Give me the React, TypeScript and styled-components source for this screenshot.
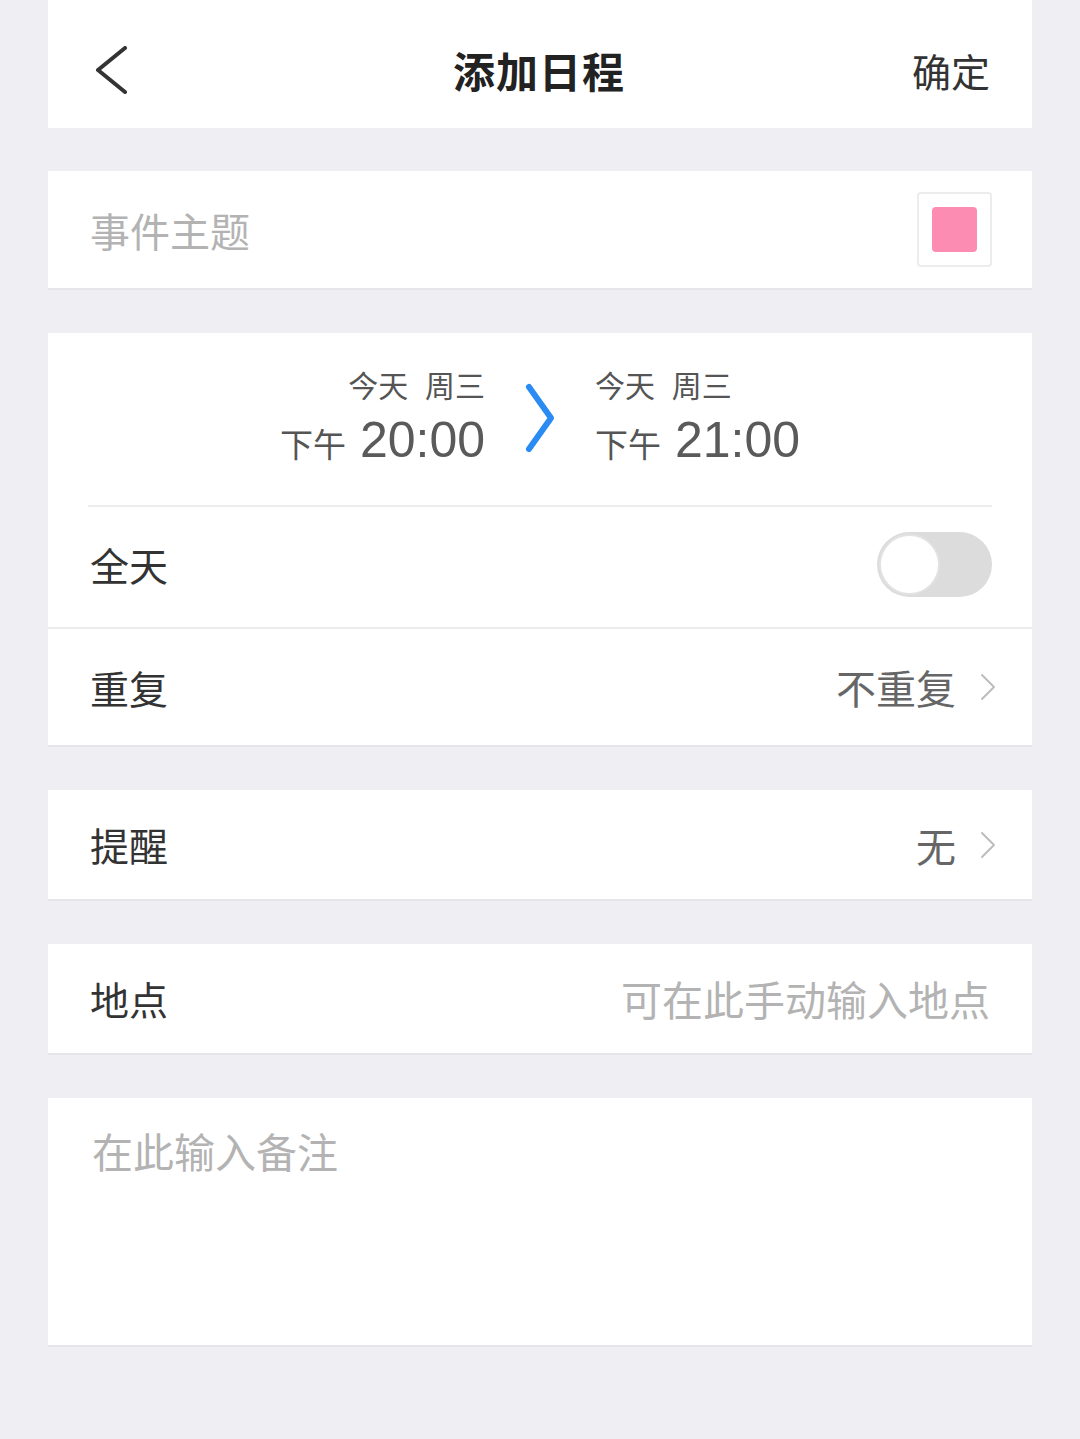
import React from 'react';
import styled, {createGlobalStyle} from 'styled-components';

const GlobalStyle = createGlobalStyle`
  html, body {
    margin: 0;
    padding: 0;
    background: #efeff3;
  }
  body {
    font-family: "Noto Sans CJK SC", "Noto Sans", sans-serif;
  }
`

const Page = styled.div`
  min-height: 1439px;
  padding: 0 48px;
  box-sizing: border-box;
  display: flex;
  flex-direction: column;
  gap: 43px;
`

const Card = styled.section`
  background: #fff;
  border-bottom: 2px solid #e6e6ea;
  box-sizing: border-box;
`

const Header = styled(Card)`
  height: 128px;
  display: grid;
  grid-template-columns: 1fr auto 1fr;
  align-items: center;
  padding: 12px 42px 0 46px;
  border-bottom: none;
`

const BackButton = styled.button`
  justify-self: start;
  background: none;
  border: none;
  padding: 0;
  display: flex;
`

const Title = styled.h1`
  margin: 0;
  font-size: 42px;
  font-weight: 700;
  color: #222;
  letter-spacing: 1px;
  line-height: 1;
  margin-left: -6px;
`

const Confirm = styled.span`
  justify-self: end;
  font-size: 39px;
  color: #333;
  line-height: 1;
`

const SubjectCard = styled(Card)`
  height: 119px;
  display: flex;
  align-items: center;
  justify-content: space-between;
  padding: 0 40px 0 42px;
`

const Placeholder = styled.span<{ $size?: number }>`
  font-size: ${p => p.$size ?? 40}px;
  color: #b3b3b3;
  line-height: 1;
`

const Swatch = styled.div`
  width: 75px;
  height: 75px;
  box-sizing: border-box;
  border: 2px solid #ececec;
  border-radius: 4px;
  display: flex;
  align-items: center;
  justify-content: center;

  &::after {
    content: "";
    width: 45px;
    height: 45px;
    border-radius: 4px;
    background: #fd8cb2;
  }
`

const TimeCard = styled(Card)`
  display: flex;
  flex-direction: column;
`

const TimeRange = styled.div`
  height: 172px;
  display: grid;
  grid-template-columns: 1fr auto 1fr;
  column-gap: 40px;
  align-items: center;
  padding-bottom: 4px;
  box-sizing: border-box;
`

const TimeBlock = styled.div<{ $align: 'left' | 'right' }>`
  display: flex;
  flex-direction: column;
  align-items: ${p => (p.$align === 'right' ? 'flex-end' : 'flex-start')};
  gap: 16px;
  color: #555;
`

const DateLine = styled.div`
  font-size: 30px;
  line-height: 1;
  word-spacing: 10px;
`

const TimeLine = styled.div`
  display: flex;
  align-items: baseline;
  gap: 14px;
  line-height: 1;
`

const Meridiem = styled.span`
  font-size: 33px;
`

const Clock = styled.span`
  font-family: "Liberation Sans", "Noto Sans", sans-serif;
  font-size: 50px;
  color: #5a5a5a;
`

const ArrowIcon = styled.svg`
  margin-top: 2px;
`

const Divider = styled.div<{ $inset?: boolean }>`
  height: 2px;
  background: #ececec;
  margin: ${p => (p.$inset ? '0 40px' : '0')};
`

const Row = styled.div<{ $height: number; $lift?: number }>`
  height: ${p => p.$height}px;
  display: flex;
  align-items: center;
  justify-content: space-between;
  padding: 0 36px ${p => p.$lift ?? 0}px 42px;
  box-sizing: border-box;
`

const RowCard = styled(Card)<{ $height: number }>`
  height: ${p => p.$height}px;
  display: flex;
  align-items: center;
  justify-content: space-between;
  padding: 0 36px 0 42px;
`

const Label = styled.span`
  font-size: 39px;
  color: #333;
  line-height: 1;
`

const Value = styled.span`
  display: flex;
  align-items: center;
  gap: 24px;
  font-size: 40px;
  color: #666;
  line-height: 1;
`

const RightPlaceholder = styled(Placeholder)`
  margin-right: 6px;
`

const Toggle = styled.div<{ $on?: boolean }>`
  width: 115px;
  height: 65px;
  border-radius: 33px;
  background: ${p => (p.$on ? '#4cd964' : '#dcdcdc')};
  margin-right: 4px;
  position: relative;

  &::after {
    content: "";
    position: absolute;
    top: 2px;
    left: ${p => (p.$on ? '52px' : '2px')};
    width: 61px;
    height: 61px;
    box-sizing: border-box;
    border-radius: 50%;
    background: #fff;
    border: 2px solid #e2e2e2;
  }
`

const NotesCard = styled(Card)`
  height: 249px;
  padding: 32px 44px;
`

const Chevron = () => (
    <svg width="16" height="28" viewBox="0 0 16 28">
        <path d="M2 2 L14 14 L2 26" fill="none" stroke="#bdbdbd" strokeWidth="2" strokeLinecap="round"
              strokeLinejoin="round"/>
    </svg>
)

export default function App() {
    return (
        <>
            <GlobalStyle/>
            <Page>
                <Header>
                    <BackButton aria-label="返回">
                        <svg width="36" height="48" viewBox="0 0 36 48">
                            <path d="M31 2 L4 24 L31 46" fill="none" stroke="#333" strokeWidth="4"
                                  strokeLinecap="round" strokeLinejoin="round"/>
                        </svg>
                    </BackButton>
                    <Title>添加日程</Title>
                    <Confirm>确定</Confirm>
                </Header>

                <SubjectCard>
                    <Placeholder>事件主题</Placeholder>
                    <Swatch/>
                </SubjectCard>

                <TimeCard>
                    <TimeRange>
                        <TimeBlock $align="right">
                            <DateLine>今天 周三</DateLine>
                            <TimeLine>
                                <Meridiem>下午</Meridiem>
                                <Clock>20:00</Clock>
                            </TimeLine>
                        </TimeBlock>
                        <ArrowIcon width="30" height="70" viewBox="0 0 30 70">
                            <path d="M4 4 L26 35 L4 66" fill="none" stroke="#2a8cf2" strokeWidth="6"
                                  strokeLinecap="round" strokeLinejoin="round"/>
                        </ArrowIcon>
                        <TimeBlock $align="left">
                            <DateLine>今天 周三</DateLine>
                            <TimeLine>
                                <Meridiem>下午</Meridiem>
                                <Clock>21:00</Clock>
                            </TimeLine>
                        </TimeBlock>
                    </TimeRange>
                    <Divider $inset/>
                    <Row $height={120} $lift={6}>
                        <Label>全天</Label>
                        <Toggle/>
                    </Row>
                    <Divider/>
                    <Row $height={116}>
                        <Label>重复</Label>
                        <Value>不重复<Chevron/></Value>
                    </Row>
                </TimeCard>

                <RowCard $height={111}>
                    <Label>提醒</Label>
                    <Value>无<Chevron/></Value>
                </RowCard>

                <RowCard $height={111}>
                    <Label>地点</Label>
                    <RightPlaceholder $size={41}>可在此手动输入地点</RightPlaceholder>
                </RowCard>

                <NotesCard>
                    <Placeholder $size={41}>在此输入备注</Placeholder>
                </NotesCard>
            </Page>
        </>
    );
}
